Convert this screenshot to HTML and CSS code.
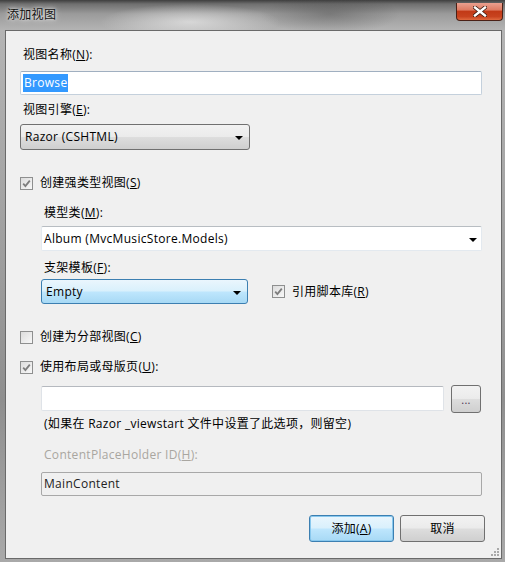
FILE: index.html
```html
<!DOCTYPE html>
<html lang="zh-CN">

<head>
    <meta charset="UTF-8">
    <title>添加视图</title>
    <link rel="stylesheet" href="styles.css">
</head>

<body>
    <div class="frame">
        <div class="titlebar">
            <span class="title">添加视图</span>
            <span class="close">
                <svg width="14" height="11" viewBox="0 0 14 11">
                    <path d="M2 1.5 L12 9.5 M12 1.5 L2 9.5" stroke="#3a1a10" stroke-width="4" stroke-linecap="square" />
                    <path d="M2 1.5 L12 9.5 M12 1.5 L2 9.5" stroke="#fff" stroke-width="2.4" stroke-linecap="square" />
                </svg>
            </span>
        </div>

        <div class="client">
            <div class="label first">视图名称(<u>N</u>):</div>
            <div class="textbox name"><span class="sel">Browse</span></div>

            <div class="label gap7">视图引擎(<u>E</u>):</div>
            <div class="combo btn-combo engine">Razor (CSHTML)<i class="arrow"></i></div>

            <div class="check gap25">
                <span class="box"><svg width="11" height="11" viewBox="0 0 11 11"><path d="M2.2 5.6 L4.4 8 L8.8 2.6" fill="none" stroke="#7d7d7d" stroke-width="1.8" /></svg></span>
                创建强类型视图(<u>S</u>)
            </div>

            <div class="indent">
                <div class="label gap14">模型类(<u>M</u>):</div>
                <div class="combo edit-combo model">Album (MvcMusicStore.Models)<i class="arrow"></i></div>

                <div class="label gap9">支架模板(<u>F</u>):</div>
                <div class="row template-row">
                    <div class="combo hot-combo template">Empty<i class="arrow"></i></div>
                    <div class="check scripts">
                        <span class="box"><svg width="11" height="11" viewBox="0 0 11 11"><path d="M2.2 5.6 L4.4 8 L8.8 2.6" fill="none" stroke="#7d7d7d" stroke-width="1.8" /></svg></span>
                        引用脚本库(<u>R</u>)
                    </div>
                </div>
            </div>

            <div class="check gap25">
                <span class="box"></span>
                创建为分部视图(<u>C</u>)
            </div>

            <div class="check gap14">
                <span class="box"><svg width="11" height="11" viewBox="0 0 11 11"><path d="M2.2 5.6 L4.4 8 L8.8 2.6" fill="none" stroke="#7d7d7d" stroke-width="1.8" /></svg></span>
                使用布局或母版页(<u>U</u>):
            </div>

            <div class="indent">
                <div class="row layout-row">
                    <div class="textbox layout"></div>
                    <div class="button browse">...</div>
                </div>
                <div class="label note">(如果在 Razor _viewstart 文件中设置了此选项，则留空)</div>

                <div class="label disabled gap15">ContentPlaceHolder ID(<u>H</u>):</div>
                <div class="textbox readonly">MainContent</div>
            </div>

            <div class="actions">
                <div class="button default">添加(<u>A</u>)</div>
                <div class="button">取消</div>
            </div>

            <div class="grip">
                <svg width="10" height="10" viewBox="0 0 10 10" fill="#a9a9a9">
                    <rect x="7" y="1" width="2" height="2" />
                    <rect x="4" y="4" width="2" height="2" />
                    <rect x="7" y="4" width="2" height="2" />
                    <rect x="1" y="7" width="2" height="2" />
                    <rect x="4" y="7" width="2" height="2" />
                    <rect x="7" y="7" width="2" height="2" />
                </svg>
            </div>
        </div>
    </div>
</body>

</html>
```

FILE: styles.css
```css
body {
    margin: 0;
    width: 505px;
    height: 562px;
    overflow: hidden;
    font-family: "Open Sans", "Noto Sans CJK SC", sans-serif;
    font-size: 12px;
    letter-spacing: 0.3px;
    color: #000;
}

.frame {
    width: 505px;
    height: 562px;
    background:
        radial-gradient(ellipse 90px 18px at 190px 22px, rgba(235, 235, 235, 0.7), transparent),
        radial-gradient(ellipse 70px 20px at 330px 14px, rgba(60, 60, 60, 0.35), transparent),
        linear-gradient(#3e3e3e 0px, #6f6f6f 4px, #9b9b9b 14px, #b4b4b4 30px, #a4a4a4 200px, #8f8f8f 400px, #a9a9a9 562px);
}

.titlebar {
    height: 30px;
    display: flex;
    justify-content: space-between;
    align-items: flex-start;
    padding: 0 2px 0 7px;
    box-sizing: border-box;
}

.title {
    margin-top: 7px;
    line-height: 16px;
    color: #111;
    text-shadow: 0 0 6px rgba(255, 255, 255, 0.8), 0 0 3px rgba(255, 255, 255, 0.8);
}

.close {
    margin-top: 3px;
    width: 47px;
    height: 18px;
    box-sizing: border-box;
    border: 1px solid #4a2016;
    border-top: none;
    border-radius: 0 0 4px 4px;
    background: linear-gradient(#eaa08f 0%, #de7b63 40%, #c23a17 50%, #c8431f 80%, #e06a3f 100%);
    display: flex;
    align-items: center;
    justify-content: center;
}

.close svg {
    display: block;
}

.client {
    position: relative;
    margin-left: 5px;
    width: 497px;
    height: 529px;
    box-sizing: border-box;
    border: 1px solid #6a6a6a;
    background: #f0f0f0;
    padding: 16px 19px 0 14px;
}

.label {
    line-height: 16px;
    padding-left: 3px;
    white-space: nowrap;
}

.label.first { margin-top: 0; }
.gap7 { margin-top: 7px; }
.gap9 { margin-top: 9px; }
.gap14 { margin-top: 14px; }
.gap15 { margin-top: 15px; }
.gap25 { margin-top: 25px; }

.label.disabled {
    color: #a9a6a0;
}

.textbox {
    height: 24px;
    box-sizing: border-box;
    border: 1px solid #dfe3e8;
    border-top-color: #b5b9bf;
    border-radius: 2px;
    background: #fff;
    padding-left: 2px;
    line-height: 22px;
    display: flex;
    align-items: center;
}

.textbox.name {
    margin-top: 8px;
    border-color: #c4d0dc;
    border-top-color: #a0afc0;
}

.sel {
    background: #3399ff;
    color: #fff;
    line-height: 18px;
    padding: 0 1px;
}

.textbox.readonly {
    margin-top: 9px;
    background: #f0f0f0;
    border-color: #a8a8a8;
    color: #222;
}

.combo {
    position: relative;
    box-sizing: border-box;
    line-height: 23px;
    padding-left: 4px;
}

.arrow {
    position: absolute;
    right: 6px;
    top: 11px;
    width: 0;
    height: 0;
    border-left: 4px solid transparent;
    border-right: 4px solid transparent;
    border-top: 4px solid #000;
}

.btn-combo {
    margin-top: 6px;
    width: 230px;
    height: 26px;
    border: 1px solid #707070;
    border-radius: 3px;
    background: linear-gradient(#f2f2f2 0%, #ebebeb 48%, #dddddd 52%, #cfcfcf 100%);
}

.edit-combo {
    margin-top: 5px;
    height: 25px;
    border: 1px solid #e3e9ef;
    border-top-color: #b8bdc2;
    border-radius: 2px;
    background: #fff;
    padding-left: 2px;
}

.edit-combo .arrow {
    right: 4px;
}

.hot-combo {
    width: 207px;
    height: 25px;
    border: 1px solid #3c7fb1;
    border-radius: 3px;
    background: linear-gradient(#eaf6fd 0%, #d9f0fc 48%, #bee6fd 52%, #a7d9f5 100%);
}

.indent {
    margin-left: 21px;
}

.row {
    display: flex;
    align-items: center;
}

.template-row {
    margin-top: 3px;
}

.check {
    display: flex;
    align-items: center;
    line-height: 16px;
    white-space: nowrap;
}

.box {
    width: 13px;
    height: 13px;
    box-sizing: border-box;
    border: 1px solid #8e8f8f;
    background: linear-gradient(135deg, #dcdcdc, #f8f8f8);
    margin-right: 7px;
    display: flex;
    align-items: center;
    justify-content: center;
}

.box svg {
    display: block;
}

.check.scripts {
    margin-left: 24px;
}

.layout-row {
    margin-top: 10px;
    height: 27px;
}

.textbox.layout {
    flex: 1;
    height: 25px;
}

.button {
    box-sizing: border-box;
    height: 27px;
    width: 85px;
    border: 1px solid #707070;
    border-radius: 3px;
    background: linear-gradient(#f2f2f2 0%, #ebebeb 48%, #dddddd 52%, #cfcfcf 100%);
    display: flex;
    align-items: center;
    justify-content: center;
    line-height: 16px;
}

.button.browse {
    width: 30px;
    height: 28px;
    margin-left: 7px;
    margin-right: 1px;
    font-size: 11px;
    color: #4a3050;
    padding-top: 2px;
}

.note {
    margin-top: 4px;
}

.actions {
    margin-top: 19px;
    margin-right: -3px;
    display: flex;
    justify-content: flex-end;
    gap: 6px;
}

.button.default {
    border-color: #3c7fb1;
    background: linear-gradient(#eaf6fd 0%, #d9f0fc 48%, #bee6fd 52%, #a7d9f5 100%);
    box-shadow: inset 0 0 0 1px #88c8ee;
}

.grip {
    position: absolute;
    right: 1px;
    bottom: 1px;
}

.grip svg {
    display: block;
}
```
